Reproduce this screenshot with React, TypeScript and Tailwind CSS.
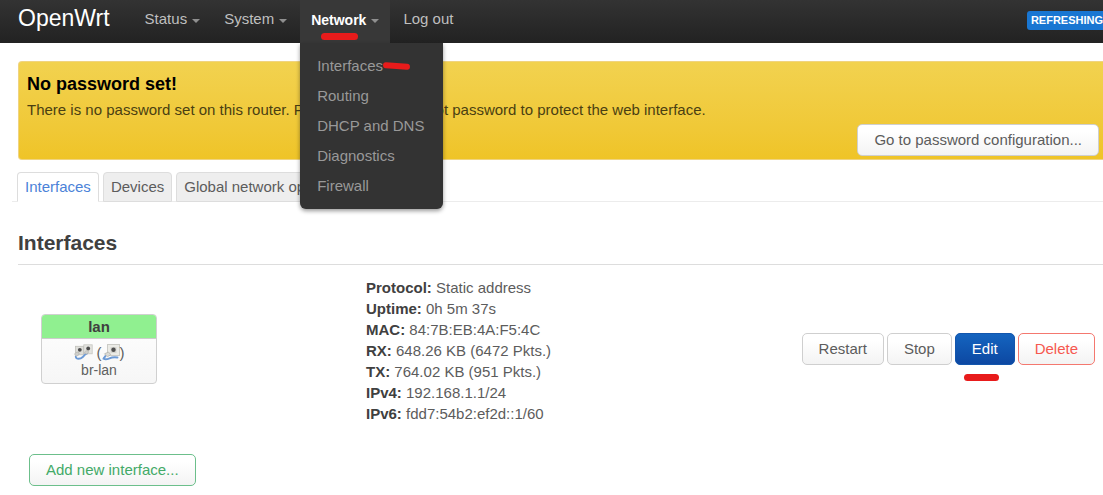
import { type ReactNode } from "react";
import { clsx } from "clsx";

const NETWORK_MENU = ["Interfaces", "Routing", "DHCP and DNS", "Diagnostics", "Firewall"];

const TABS = ["Interfaces", "Devices", "Global network options"];

const LAN_STATS = [
  { label: "Protocol", value: "Static address" },
  { label: "Uptime", value: "0h 5m 37s" },
  { label: "MAC", value: "84:7B:EB:4A:F5:4C" },
  { label: "RX", value: "648.26 KB (6472 Pkts.)" },
  { label: "TX", value: "764.02 KB (951 Pkts.)" },
  { label: "IPv4", value: "192.168.1.1/24" },
  { label: "IPv6", value: "fdd7:54b2:ef2d::1/60" },
];

type ButtonTone = "neutral" | "primary" | "danger" | "success";

const BUTTON_TONES: Record<ButtonTone, string> = {
  neutral: "border-[#cfcfcf] from-white from-25% to-[#f3f3f3] text-[#5c5c5c]",
  primary: "border-[#1356ad] from-[#1565c0] to-[#0d47a1] text-white",
  danger: "border-[#f4786f] from-white from-25% to-[#f3f3f3] text-[#f6584f]",
  success: "border-[#6cbf8b] from-white from-25% to-[#f3f3f3] text-[#43aa68]",
};

function Button({ tone = "neutral", children }: { tone?: ButtonTone; children: ReactNode }) {
  return (
    <button
      type="button"
      className={clsx(
        "h-8 whitespace-nowrap rounded-[5px] border bg-linear-to-b bg-origin-border px-4 text-[15px] leading-5",
        BUTTON_TONES[tone],
      )}
    >
      {children}
    </button>
  );
}

function NavLink({ label, caret, active }: { label: string; caret?: boolean; active?: boolean }) {
  return (
    <a
      href="#"
      className={clsx(
        "flex h-[43px] items-center gap-[5px] px-[11px] pb-1 whitespace-nowrap",
        active ? "bg-[#383838] text-sm font-bold text-white" : "text-[15px] text-[#bfbfbf]",
      )}
    >
      {label}
      {caret && (
        <span className="mt-[2px] border-x-4 border-t-4 border-x-transparent border-t-[#8f8f8f]" />
      )}
    </a>
  );
}

function Marker({ className }: { className: string }) {
  return <span className={clsx("absolute rounded-full bg-[#e81b1b]", className)} />;
}

function BridgeIcon() {
  return (
    <svg className="shrink-0" width="19" height="17" viewBox="0 0 19 17" aria-hidden="true">
      <rect x="9.800" y=".8" width="8.400" height="9" fill="#e3e3df" stroke="#c6c6c1" strokeWidth=".8" />
      <rect x="1.500" y="2.300" width="8" height="8.500" fill="#dededa" stroke="#c0c0bb" strokeWidth=".8" />
      <circle cx="5.800" cy="5.800" r="1.900" fill="#4c4c4c" />
      <circle cx="14.200" cy="4.500" r="1.900" fill="#4c4c4c" />
      <path d="M1.800 12.800c.5 2.700 4.500 2.500 7 .2 1.700-1.600 2-2.800 4-3.300" fill="none" stroke="#6c9ad6" strokeWidth="1.900" strokeLinecap="round" />
      <path d="M1 9.500c1-1.500 3-2 4-.8.600 1.300-.3 3-2.200 3.200C1.200 12 .5 10.700 1 9.500z" fill="#cfcfcb" stroke="#adada8" strokeWidth=".6" />
      <path d="M10.800 7.800c1-1.300 2.700-1.600 3.500-.5.500 1.200-.5 2.600-2 2.700-1.200 0-2-1-1.500-2.200z" fill="#cfcfcb" stroke="#adada8" strokeWidth=".6" />
    </svg>
  );
}

function EthernetIcon() {
  return (
    <svg className="shrink-0" width="18" height="17" viewBox="0 0 18 17" aria-hidden="true">
      <rect x="5.500" y=".5" width="12" height="11" fill="#ebebe6" stroke="#cbcbc6" />
      <rect x="8.500" y="3" width="6" height="6" fill="#d6d6d1" />
      <circle cx="11.500" cy="5.800" r="2.200" fill="#505050" />
      <path d="M15.500 13.500c-4-.5-5.500-.3-8 .8-2.300 1-4.500 1.200-6 .4.300-1.200 1.500-1.700 2-2.700" fill="none" stroke="#6c9ad6" strokeWidth="1.900" strokeLinecap="round" />
      <path d="M2.500 9.800 6.500 8l2.200 2.600-3.200 2.200z" fill="#dadad5" stroke="#adada8" strokeWidth=".7" />
    </svg>
  );
}

function Header() {
  return (
    <header className="relative z-10 flex h-[43px] items-start bg-linear-to-b from-[#333333] to-[#222222] pl-[18px]">
      <a href="#" className="mr-6 pt-[2px] text-[23px] leading-8 text-white">
        OpenWrt
      </a>
      <nav className="flex gap-[2px]">
        <NavLink label="Status" caret />
        <NavLink label="System" caret />
        <div className="relative">
          <NavLink label="Network" caret active />
          <Marker className="bottom-[3px] left-[21px] h-[7px] w-[37px]" />
          <ul className="absolute top-full left-0 w-[143px] rounded-b-md bg-[#333333] py-2 shadow-[0_2px_4px_rgba(0,0,0,0.4)]">
            {NETWORK_MENU.map((item, index) => (
              <li key={item} className="relative">
                <a href="#" className="block px-[17px] text-[15px] leading-[30px] whitespace-nowrap text-[#999999]">
                  {item}
                </a>
                {index === 0 && <Marker className="top-3 left-[83px] h-[6px] w-[27px] rotate-4" />}
              </li>
            ))}
          </ul>
        </div>
        <NavLink label="Log out" />
      </nav>
      <span className="mt-[11px] ml-auto rounded-l-[3px] bg-[#1976d2] pl-1 text-[11px] leading-[19px] font-bold text-white">
        REFRESHING
      </span>
    </header>
  );
}

function PasswordWarning() {
  return (
    <section className="mt-[18px] rounded-l border border-r-0 border-[#f0d480] bg-linear-to-b from-[#f2d24f] to-[#efc427] pt-2 pr-1 pb-[3px] pl-2">
      <h4 className="text-lg leading-7 font-bold text-black">No password set!</h4>
      <p className="text-[15px] leading-6 text-[#4a3f12]">
        There is no password set on this router. Please configure a root password to protect the web interface.
      </p>
      <div className="mt-[2px] flex justify-end">
        <Button>Go to password configuration...</Button>
      </div>
    </section>
  );
}

function InterfaceBadge() {
  return (
    <div className="w-[116px] overflow-hidden rounded border border-[#d0d0d0] bg-linear-to-b from-white to-[#f6f6f6] text-center text-[15px]">
      <div className="border-b border-[#cccccc] bg-[#90f090] leading-[23px] font-bold">lan</div>
      <div className="py-[5px] text-[#606060]">
        <div className="flex items-center justify-center leading-[18px]">
          <BridgeIcon />
          <span className="pl-1">(</span>
          <EthernetIcon />
          <span>)</span>
        </div>
        <div className="text-sm leading-4">br-lan</div>
      </div>
    </div>
  );
}

export default function App() {
  return (
    <div className="overflow-x-hidden bg-white font-['Liberation_Sans',Arial,sans-serif] text-[#404040]">
      <Header />
      <main className="pb-2 pl-[18px]">
        <PasswordWarning />

        <ul className="mt-3 -ml-[6px] flex gap-1 border-b border-[#ececec] pl-[5px]">
          {TABS.map((tab, index) => (
            <li key={tab} className="-mb-px">
              <a
                href="#"
                className={clsx(
                  "block rounded-t border px-[7px] text-[15px] leading-7 whitespace-nowrap",
                  index === 0
                    ? "border-[#dddddd] border-b-white bg-white text-[#4b82d8]"
                    : "border-[#dddddd] bg-[#eeeeee] text-[#5c5c5c]",
                )}
              >
                {tab}
              </a>
            </li>
          ))}
        </ul>

        <h3 className="mt-6 border-b border-[#dddddd] pb-1 text-[21px] leading-[34px] font-bold">Interfaces</h3>

        <table className="mt-3 w-full table-fixed">
          <tbody>
            <tr>
              <td className="w-[348px] pb-1 pl-[23px]">
                <InterfaceBadge />
              </td>
              <td className="text-[15px] leading-[21px]">
                {LAN_STATS.map((stat) => (
                  <div key={stat.label} className="text-[#5c5c5c]">
                    <strong className="text-[#404040]">{stat.label}:</strong> {stat.value}
                  </div>
                ))}
              </td>
              <td className="pr-2 pb-1">
                <div className="flex justify-end gap-[3px]">
                  <Button>Restart</Button>
                  <Button>Stop</Button>
                  <div className="relative">
                    <Button tone="primary">Edit</Button>
                    <Marker className="top-full left-[9px] mt-[9px] h-[7px] w-[35px]" />
                  </div>
                  <Button tone="danger">Delete</Button>
                </div>
              </td>
            </tr>
          </tbody>
        </table>

        <div className="mt-[30px] pl-[11px]">
          <Button tone="success">Add new interface...</Button>
        </div>
      </main>
    </div>
  );
}
